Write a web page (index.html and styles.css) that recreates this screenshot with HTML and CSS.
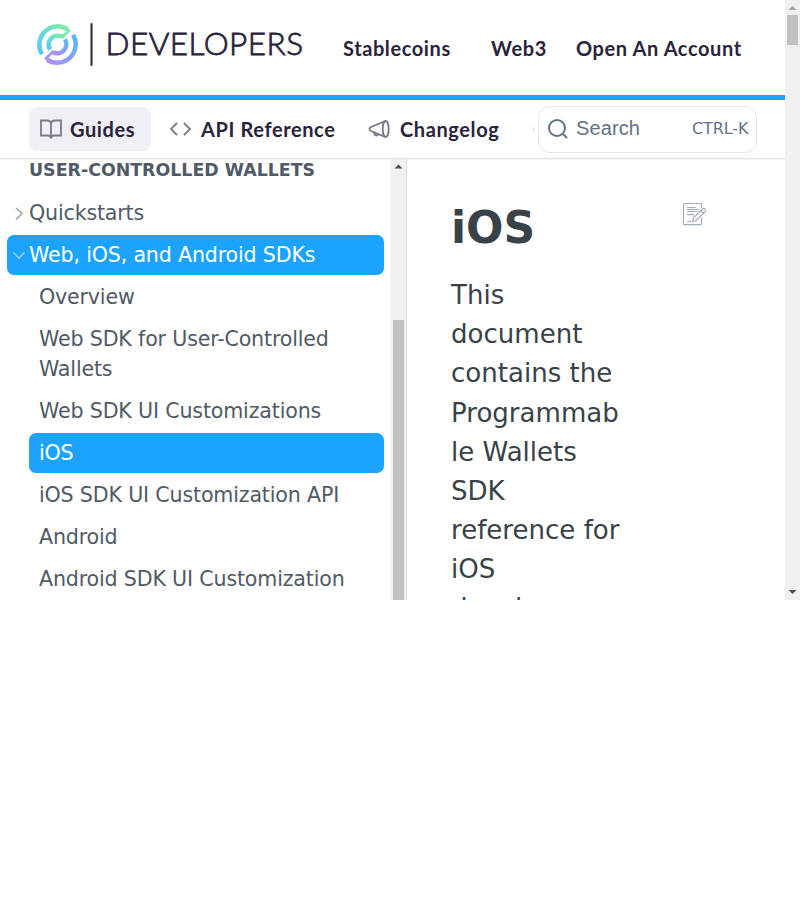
FILE: index.html
```html
<!DOCTYPE html>
<html lang="en">
<head>
<meta charset="utf-8">
<title>iOS</title>
<link rel="stylesheet" href="styles.css">
</head>
<body>
<div class="window">
  <div class="page">
    <header class="top">
      <svg class="logo" width="270" height="50" viewBox="0 0 270 50">
        <defs>
          <linearGradient id="g1" x1="0" y1="1" x2="1" y2="0"><stop offset="0" stop-color="#53c8ff"/><stop offset="1" stop-color="#7df0a5"/></linearGradient>
          <linearGradient id="g2" x1="0" y1="1" x2="1" y2="0"><stop offset="0" stop-color="#b28cf5"/><stop offset="1" stop-color="#58b8ff"/></linearGradient>
        </defs>
        <g transform="translate(22.500 24.500) scale(.9)">
          <g fill="none" stroke-width="5">
            <path stroke="url(#g1)" d="M-17.200 10.700A20.300 20.300 0 0 1 11.500 -16.700"/>
            <path stroke="url(#g1)" d="M-8.200 5.500A9.900 9.900 0 0 1 4 -9"/>
            <path stroke="url(#g2)" d="M17.200 -10.700A20.300 20.300 0 0 1 -11.500 16.700"/>
            <path stroke="url(#g2)" d="M8.200 -5.500A9.900 9.900 0 0 1 -4 9"/>
          </g>
          <path fill="#7beaae" d="M9.500-19.500 15-15.500 6-6.500 2.500-7 2-11.500 6.500-11.500 10-15z"/>
          <path fill="#b091f5" d="M-9.500 19.500-15 15.500-6 6.500-2.500 7-2 11.500-6.500 11.500-10 15z"/>
        </g>
        <rect x="55.500" y="3" width="2" height="43" rx="1" fill="#29233b"/>
        <text class="wordmark" x="70.500" y="35.300" textLength="197.500">DEVELOPERS</text>
      </svg>
      <nav class="links"><a class="l1">Stablecoins</a><a class="l2">Web3</a><a class="l3">Open An Account</a></nav>
    </header>
    <div class="tabs">
      <a class="tab active"><svg width="24" height="24" viewBox="0 0 24 24"><path d="M2 3.500h6q4 0 4 4q0-4 4-4h6v15h-7q-3 0-3 3q0-3-3-3H2zM12 7v14"/></svg><span class="t1">Guides</span></a>
      <a class="tab api"><svg width="24" height="24" viewBox="0 0 24 24"><path d="m9 6-6 6 6 6M16 6l6 6-6 6"/></svg><span class="t2">API Reference</span></a>
      <a class="tab log"><svg width="24" height="24" viewBox="0 0 24 24"><path d="M18.200 4 3.500 10.200q-2 1.800 0 3.600L18.200 19.800M7 15.300q0 3.200 2.500 3.200 1.500 0 2-1.500"/><ellipse cx="18.700" cy="12" rx="3" ry="8"/></svg><span class="t3">Changelog</span></a>
      <i class="tick"></i>
      <div class="search"><svg width="24" height="24" viewBox="0 0 24 24"><circle cx="11" cy="11" r="8"/><path d="m17 17 4 4"/></svg><span class="ph">Search</span><span class="key">CTRL-K</span></div>
    </div>
    <div class="body">
      <aside class="side">
        <h2>USER-CONTROLLED WALLETS</h2>
        <a class="row parent"><svg width="12" height="14" viewBox="0 0 12 14"><path d="m3 2 6 5.500-6 6"/></svg>Quickstarts</a>
        <a class="row parent on"><svg width="12" height="14" viewBox="0 0 12 14"><path d="m.5 4.500 5.500 5.500 5.500-5.500"/></svg>Web, iOS, and Android SDKs</a>
        <div class="kids">
          <a class="row">Overview</a>
          <a class="row">Web SDK for User-Controlled<br>Wallets</a>
          <a class="row">Web SDK UI Customizations</a>
          <a class="row on">iOS</a>
          <a class="row">iOS SDK UI Customization API</a>
          <a class="row">Android</a>
          <a class="row">Android SDK UI Customization</a>
        </div>
      </aside>
      <div class="bar inner"><svg width="15" height="15" viewBox="0 0 15 15"><path fill="#505050" d="M3.500 9.500h8l-4-4z"/></svg><i class="thumb"></i></div>
      <main class="doc">
        <div class="copy">
          <h1>iOS</h1>
          <p>This document contains the Programmable Wallets SDK reference for iOS developers.</p>
        </div>
        <svg class="edit" width="26" height="26" viewBox="0 0 26 26"><path d="M19.500 6V2.500q0-1-1-1h-16q-1 0-1 1v19.200q0 1 1 1h16q1 0 1-1V15.500M5 5.500h8.500M5 7.500h11.500M5 9.500h10.500M5 12.700h7M5 19.500h4M11.500 16l9-9.500q1-.5 2 .3l1 1.200q.5.800-.2 1.600L14 18.500l-3.500 1.200zM19 8.500l2.800 2.700"/></svg>
      </main>
    </div>
  </div>
  <div class="bar outer"><svg width="15" height="15" viewBox="0 0 15 15"><path fill="#a3a3a3" d="M3.500 10h8l-4-4z"/></svg><i class="thumb"></i><svg class="down" width="15" height="15" viewBox="0 0 15 15"><path fill="#505050" d="M3.500 5h8l-4 4z"/></svg></div>
</div>
</body>
</html>
```
FILE: styles.css
```css
* { box-sizing: border-box; }
body { margin: 0; background: #fff; font-family: "DejaVu Sans", sans-serif; }
svg { flex: none; display: block; }
.window { width: 800px; height: 600px; display: flex; overflow: hidden; }
.page { width: 785px; height: 600px; display: flex; flex-direction: column; }
.top { height: 100px; flex: none; border-bottom: 5px solid #1ba3ff; display: flex; padding: 20px 0 0 35px; }
.wordmark { font: 300 31.500px Lato, sans-serif; fill: #29233b; stroke: #29233b; stroke-width: .8px; }
.links { display: flex; padding-left: 38px; height: 56px; align-items: center; font: 700 20px Lato, sans-serif; letter-spacing: .6px; color: #29233b; white-space: nowrap; }
.l1 { width: 148px; }
.l2 { width: 85px; }
.tabs { height: 59px; flex: none; border-bottom: 1px solid #e3e3e3; box-shadow: 0 1px 0 #f4f4f4; display: flex; align-items: center; padding-left: 29px; font: 700 20px Lato, sans-serif; letter-spacing: .6px; color: #29233b; white-space: nowrap; }
.tab { display: flex; align-items: center; gap: 7px; height: 44px; }
.tab svg, .search svg { fill: none; stroke: #7c788a; stroke-width: 1.800px; }
.active { width: 122px; padding-left: 10px; border-radius: 8px; background: #f0eff5; }
.api { width: 200px; padding-left: 17px; gap: 9px; }
.log { width: 182px; padding-left: 16px; gap: 9px; }
.tick { width: 1px; height: 5px; background: #ddd; }
.search { margin-left: 4px; width: 219px; height: 47px; border: 1.500px solid #e5e5e5; border-radius: 12px; display: flex; align-items: center; padding-left: 7px; color: #637288; font-weight: 400; }
.search svg { stroke: #637288; stroke-width: 2px; margin-top: -1px; }
.ph { font: 20px "Liberation Sans", sans-serif; width: 116px; margin: -2px 0 0 6px; letter-spacing: .1px; }
.key { font: 16px "DejaVu Sans", sans-serif; letter-spacing: -.1px; margin-top: -1px; }
.body { height: 441px; display: flex; }
.side { width: 391px; padding: 0 7px; color: #4f5a66; overflow: hidden; }
h2 { margin: 0; padding-left: 22px; height: 34.300px; font-size: 17.400px; line-height: 22px; white-space: nowrap; }
.row { display: block; margin-bottom: 2.430px; padding: 4.500px 0 5px 10px; font-size: 20.600px; letter-spacing: -.17px; line-height: 30.100px; border-radius: 7px; white-space: nowrap; }
.parent { display: flex; align-items: center; padding-left: 6px; gap: 4px; }
.parent svg { fill: none; stroke: #9ba4ae; stroke-width: 1.600px; }
.parent.on svg { stroke: #8dd0ff; }
.on { background: #1ba3ff; color: #fff; }
.kids { padding-left: 22px; }
.bar { width: 15px; background: #f0f0f0; flex: none; }
.thumb { display: block; width: 11px; margin-left: 2px; background: #c1c1c1; }
.inner { width: 16px; border-right: 1px solid #e0e0e0; }
.inner .thumb { margin-top: 146px; height: 280px; }
.outer { height: 600px; display: flex; flex-direction: column; }
.outer .thumb { height: 30px; }
.down { margin-top: auto; }
.doc { padding: 41px 0 0 44px; display: flex; flex: 1; overflow: hidden; }
.copy { width: 174px; color: #384248; }
h1 { margin: 0; font-size: 44px; line-height: 56px; }
p { margin: 20px 0 0; font-size: 26.050px; line-height: 39.170px; overflow-wrap: anywhere; }
.edit { margin: 2px 0 0 57px; fill: none; stroke: #a1adbb; stroke-width: 1.200px; }
```
